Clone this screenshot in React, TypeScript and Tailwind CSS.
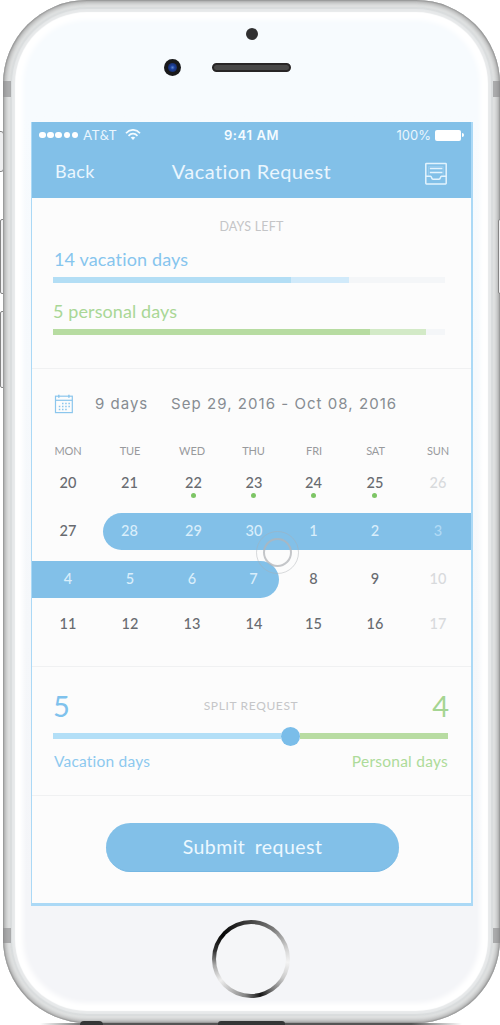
import type { ReactNode } from "react";

type Day = { n: number; tone?: "dark" | "light" | "muted" | "mutedLight"; dot?: boolean; nudge?: string };

const WEEKDAYS = ["MON", "TUE", "WED", "THU", "FRI", "SAT", "SUN"];

const WEEKS: { days: Day[]; range?: string; spacing: string }[] = [
  {
    spacing: "mt-[5px]",
    days: [
      { n: 20 },
      { n: 21, nudge: "pr-px" },
      { n: 22, dot: true, nudge: "pl-[3px]" },
      { n: 23, dot: true, nudge: "pl-px" },
      { n: 24, dot: true, nudge: "pr-px" },
      { n: 25, dot: true, nudge: "pr-px" },
      { n: 26, tone: "muted" },
    ],
  },
  {
    spacing: "mt-[11px]",
    range: "ml-[71px] rounded-l-full",
    days: [
      { n: 27 },
      { n: 28, tone: "light", nudge: "pr-px" },
      { n: 29, tone: "light", nudge: "pl-[3px]" },
      { n: 30, tone: "light", nudge: "pl-px" },
      { n: 1, tone: "light", nudge: "pr-px" },
      { n: 2, tone: "light", nudge: "pr-px" },
      { n: 3, tone: "mutedLight" },
    ],
  },
  {
    spacing: "mt-[11px]",
    range: "mr-[192px] rounded-r-full",
    days: [
      { n: 4, tone: "light" },
      { n: 5, tone: "light" },
      { n: 6, tone: "light" },
      { n: 7, tone: "light" },
      { n: 8, nudge: "pr-px" },
      { n: 9, nudge: "pr-px" },
      { n: 10, tone: "muted" },
    ],
  },
  {
    spacing: "mt-[8px]",
    days: [
      { n: 11 },
      { n: 12 },
      { n: 13 },
      { n: 14, nudge: "pl-px" },
      { n: 15, nudge: "pr-px" },
      { n: 16, nudge: "pr-px" },
      { n: 17, tone: "muted" },
    ],
  },
];

const TONES = {
  dark: "text-[#686b70]",
  light: "text-[#d9eefb]",
  muted: "text-[#d8dadc]",
  mutedLight: "text-[#b0daf5]",
};

const COLUMNS = "grid grid-cols-[62px_62px_62px_61px_60px_63px_62px] pl-[5px]";

function InboxIcon() {
  return (
    <svg width="24" height="24" viewBox="0 0 24 24" fill="none" stroke="#e3f3fd" strokeWidth="1.5" strokeLinejoin="round">
      <rect x="1.8" y="1.5" width="20.4" height="20.4" rx="0.6" />
      <path d="M4.6 13.4V4.6H19.2V13.4" strokeWidth="0.8" opacity="0.3" />
      <path d="M1.8 14.3H6.6C7.8 14.3 7.2 17.2 9 17.2H15C16.8 17.2 16.2 14.3 17.4 14.3H22.2" />
      <path d="M5.8 6.6H18.4M5.8 10.5H18.4" />
    </svg>
  );
}

function CalendarIcon() {
  return (
    <svg width="20" height="20" viewBox="0 0 20 20" fill="none" stroke="#8bc6ed">
      <rect x="1.5" y="2.2" width="16.8" height="16.4" strokeWidth="1.2" />
      <path d="M1.5 6.3H18.3" strokeWidth="1.2" />
      <path d="M4.8 0.7V3.8M14.9 0.7V3.8" strokeWidth="1.5" />
      <path
        d="M8 9.5H9.5M11.2 9.5H12.7M14.4 9.5H15.9M4.8 12.5H6.3M8 12.5H9.5M11.2 12.5H12.7M14.4 12.5H15.9M4.8 15.5H6.3M8 15.5H9.5M11.2 15.5H12.7"
        strokeWidth="1.5"
      />
    </svg>
  );
}

function WifiIcon() {
  return (
    <svg width="16" height="12" viewBox="0 0 16 12" fill="none" stroke="#f4fbff" strokeWidth="1.7">
      <path d="M1 4.2C5-.3 11-.3 15 4.2" />
      <path d="M3.5 6.8C6.2 4 9.8 4 12.5 6.8" />
      <path d="M5.7 8.6C7.2 7.3 8.8 7.3 10.3 8.6L8 11Z" fill="#f4fbff" stroke="none" />
    </svg>
  );
}

function Section({ className, children }: { className: string; children: ReactNode }) {
  return <section className={`border-b border-[#f0f1f2] ${className}`}>{children}</section>;
}

function Meter({ filled, pending }: { filled: string; pending: string }) {
  return (
    <div className="flex h-[6px] w-[392px] bg-[#f4f6f8]">
      <div className={filled} />
      <div className={pending} />
    </div>
  );
}

function StatusBar() {
  return (
    <div className="grid h-[26px] grid-cols-[1fr_auto_1fr] items-center pl-[7px] pr-[7px] text-[13px] leading-none text-[#eaf6fe]">
      <div className="flex items-center">
        <span className="mr-[5px] flex gap-[1.7px]">
          {[0, 1, 2, 3, 4].map((i) => (
            <i key={i} className="size-[6.5px] rounded-full bg-white" />
          ))}
        </span>
        <span className="mr-[8px] tracking-[0.6px]">AT&amp;T</span>
        <WifiIcon />
      </div>
      <span className="font-['Inter',sans-serif] text-[13px] font-semibold tracking-[0.6px] text-[#f4fbff]">9:41 AM</span>
      <div className="flex items-center justify-end">
        <span className="mr-[4px] font-['Inter',sans-serif] text-[13px]">100%</span>
        <i className="h-[11px] w-[26px] rounded-[2px] bg-white" />
        <i className="ml-px h-[4px] w-[2px] rounded-r-full bg-white" />
      </div>
    </div>
  );
}

function Screen() {
  return (
    <main className="ml-[28px] h-[784px] w-[442px] border-b-[3px] border-l border-r-2 border-[#abd9f6] bg-[#fcfcfc] font-['Lato',sans-serif]">
      <header className="h-[76px] bg-[#82c0e8]">
        <StatusBar />
        <div className="grid h-[46px] grid-cols-[1fr_auto_1fr] items-center pl-[23px] pr-[23px] text-[#eaf6fe]">
          <button className="justify-self-start text-[18px] leading-none tracking-[0.4px]">Back</button>
          <h1 className="text-[20px] leading-none tracking-[0.45px]">Vacation Request</h1>
          <button className="mt-[5px] justify-self-end">
            <InboxIcon />
          </button>
        </div>
      </header>

      <Section className="h-[171px] pl-[21px] pt-[21px]">
        <h2 className="mr-[21px] text-center text-[12.5px] leading-4 tracking-[0.2px] text-[#c4c5c7]">DAYS LEFT</h2>
        <p className="mt-[12px] pl-px text-[18px] leading-6 tracking-[0.15px] text-[#86c5ee]">14 vacation days</p>
        <div className="mt-[6px]">
          <Meter filled="w-[238px] bg-[#b3def5]" pending="w-[58px] bg-[#d1eafa]" />
        </div>
        <p className="mt-[16px] text-[18px] leading-6 tracking-[0.1px] text-[#a9d796]">5 personal days</p>
        <div className="mt-[6px]">
          <Meter filled="w-[317px] bg-[#b7dca1]" pending="w-[56px] bg-[#d3eac7]" />
        </div>
      </Section>

      <Section className="h-[298px] pt-[24px]">
        <div className="flex h-[22px] items-center pl-[22px] font-['Inter',sans-serif] text-[15px] text-[#878c92]">
          <CalendarIcon />
          <span className="ml-[21px] w-[76px] whitespace-nowrap tracking-[1px]">9 days</span>
          <span className="whitespace-nowrap tracking-[1.05px]">Sep 29, 2016 - Oct 08, 2016</span>
        </div>
        <div className={`mt-[25px] h-5 items-center ${COLUMNS}`}>
          {WEEKDAYS.map((d) => (
            <span key={d} className="text-center text-[11px] leading-none tracking-[-0.1px] text-[#989a9d]">
              {d}
            </span>
          ))}
        </div>
        {WEEKS.map((week, i) => (
          <div key={i} className={`grid h-[37px] ${week.spacing}`}>
            <div className={`col-start-1 row-start-1 ${week.range ? `bg-[#82c0e8] ${week.range}` : ""}`} />
            <div className={`col-start-1 row-start-1 items-center pb-px ${COLUMNS}`}>
              {week.days.map((day) => (
                <span
                  key={day.n}
                  className={`text-center text-[14.5px] font-medium leading-none ${day.nudge ?? ""} ${TONES[day.tone ?? "dark"]}`}
                >
                  <span className="relative inline-block">
                    {day.n}
                    {day.dot && <i className="absolute left-1/2 top-[17px] -ml-[2.5px] size-[5px] rounded-full bg-[#7dc565]" />}
                  </span>
                </span>
              ))}
            </div>
          </div>
        ))}
      </Section>

      <Section className="h-[129px] pl-[21px] pr-[23px] pt-[22px]">
        <div className="flex h-8 items-center justify-between leading-none">
          <span className="text-[29px] text-[#7fc2ed]">5</span>
          <span className="pt-[2px] text-[12px] tracking-[0.65px] text-[#c5c6c8]">SPLIT REQUEST</span>
          <span className="-mr-px text-[29px] text-[#a5d592]">4</span>
        </div>
        <div className="mt-[5px] flex h-5 items-center">
          <div className="h-[6px] w-[228px] bg-[#b3dff7]" />
          <div className="size-[19px] rounded-full bg-[#7abde9]" />
          <div className="h-[6px] flex-1 bg-[#b8dca2]" />
        </div>
        <div className="mt-[3px] flex justify-between text-[15.5px] leading-6">
          <span className="pl-px tracking-[0.2px] text-[#8dc9ef]">Vacation days</span>
          <span className="tracking-[0.25px] text-[#addb99]">Personal days</span>
        </div>
      </Section>

      <div className="pl-[74px] pt-[27px]">
        <button className="h-[49px] w-[293px] rounded-full border-b border-[#75b7e3] bg-[#82c0e8] text-[19.5px] leading-none tracking-[0.45px] text-[#edf8ff] [word-spacing:4px]">
          Submit request
        </button>
      </div>
    </main>
  );
}

function PhoneHardware() {
  return (
    <div className="h-[122px] pl-[161px] pt-[28px]">
      <div className="ml-[82px] size-[12px] rounded-full bg-[#303031]" />
      <div className="mt-[19px] flex items-center">
        <div className="flex size-[17px] items-center justify-center rounded-full bg-[#19191b]">
          <div className="size-[9px] rounded-full bg-[radial-gradient(circle,#5b83cc_0%,#1c3f9a_35%,#151f48_100%)]" />
        </div>
        <div className="ml-[31px] h-[9px] w-[79px] rounded-full border-2 border-[#282526] bg-[#494848]" />
      </div>
    </div>
  );
}

export default function App() {
  return (
    <div className="relative h-[1025px] w-[500px] overflow-hidden bg-white">
      <i className="absolute -left-[3px] top-[131px] h-[41px] w-[7px] rounded-[3px] border border-[#858585] bg-[#eeeeef]" />
      <i className="absolute left-0 top-[219px] h-[75px] w-[6px] rounded-[2px] border border-[#858585] bg-[#f0f0f1]" />
      <i className="absolute left-0 top-[311px] h-[77px] w-[6px] rounded-[2px] border border-[#858585] bg-[#f0f0f1]" />
      <i className="absolute bottom-0 left-[40px] h-[2px] w-[422px] bg-[linear-gradient(90deg,transparent,#555_12%,#555_88%,transparent)]" />

      <div className="relative ml-[3px] h-[1023px] w-[497px] rounded-[84px] bg-[linear-gradient(180deg,#f7fbfe_0%,#f7fbfe_11%,#f4f5f8_88%)] shadow-[inset_0_0_2px_1px_#8d8d8d,inset_0_0_3px_4px_#c3c4c4,inset_0_0_1px_7px_#e0e2e2,inset_0_0_1px_9px_#d9dcdd,inset_0_0_1px_12px_#e7e9ea,inset_0_0_5px_20px_#ffffff]">
        <PhoneHardware />
        <Screen />
        <div className="ml-[209px] mt-[14px] flex size-[78px] items-center justify-center rounded-full bg-[conic-gradient(#444_0deg,#777_35deg,#d5d5d5_75deg,#f3f3f3_95deg,#ccc_120deg,#777_145deg,#151515_165deg,#888_190deg,#eee_235deg,#aaa_260deg,#333_282deg,#050505_310deg,#222_335deg,#444_360deg)]">
          <div className="size-[70px] rounded-full bg-[#f5f6f8]" />
        </div>
      </div>

      <i className="absolute left-[3px] top-[81px] h-[16px] w-[8px] bg-[#88898a]/60" />
      <i className="absolute right-0 top-[81px] h-[16px] w-[7px] bg-[#88898a]/60" />
      <i className="absolute left-[3px] top-[928px] h-[15px] w-[8px] bg-[#88898a]/60" />
      <i className="absolute right-0 top-[928px] h-[15px] w-[7px] bg-[#88898a]/60" />
      <i className="absolute -right-[3px] top-[219px] h-[75px] w-[5px] rounded-[2px] border border-[#858585] bg-[#f0f0f1]" />
      <i className="absolute bottom-0 left-[80px] h-[4px] w-[23px] rounded-t-full bg-[#343636]" />
      <i className="absolute bottom-0 left-[218px] h-[4px] w-[67px] rounded-t-[3px] bg-[#343636]" />

      <i className="absolute left-[256px] top-[531px] size-[43px] rounded-full border border-[#a9adb1]/45" />
      <i className="absolute left-[263px] top-[538px] size-[29px] rounded-full border-2 border-[#b1b4b8]/75" />
    </div>
  );
}
